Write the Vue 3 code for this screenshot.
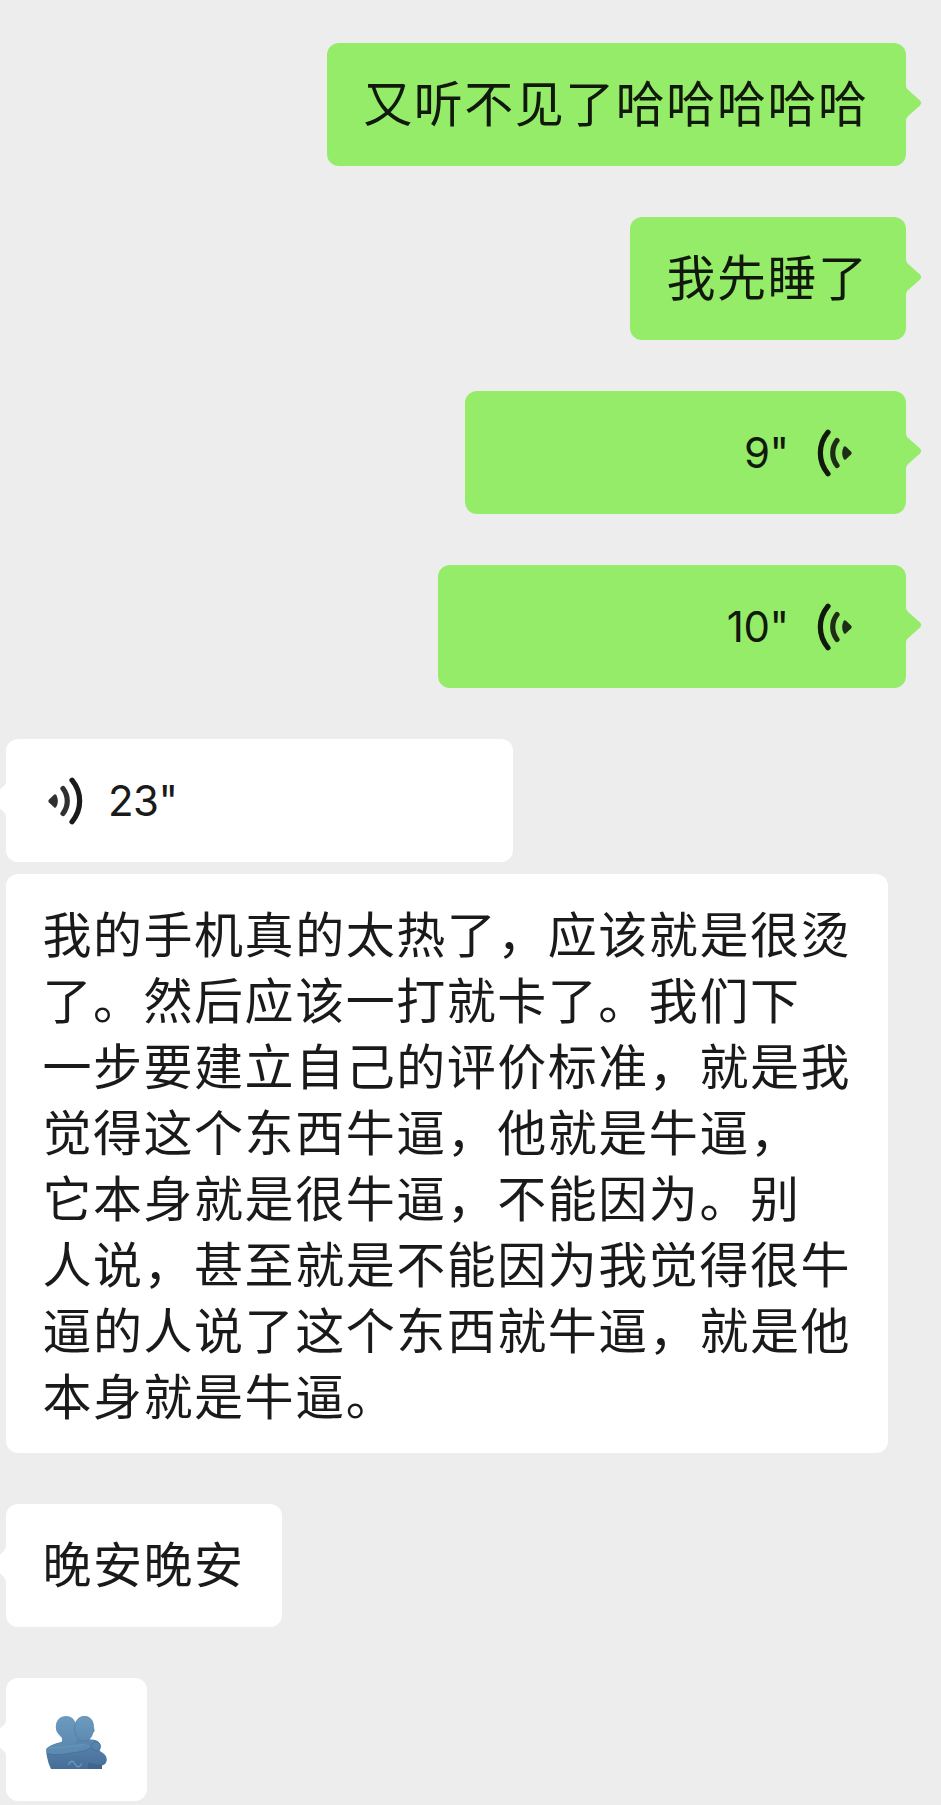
<script setup>
import { ref } from 'vue'

const messages = ref([
  { id: 1, side: 'right', type: 'text', lines: ['又听不见了哈哈哈哈哈'] },
  { id: 2, side: 'right', type: 'text', lines: ['我先睡了'] },
  { id: 3, side: 'right', type: 'voice', seconds: 9, width: 441 },
  { id: 4, side: 'right', type: 'voice', seconds: 10, width: 468 },
  {
    id: 5,
    side: 'left',
    type: 'voice',
    seconds: 23,
    width: 507,
    transcript: [
      '我的手机真的太热了，应该就是很烫',
      '了。然后应该一打就卡了。我们下',
      '一步要建立自己的评价标准，就是我',
      '觉得这个东西牛逼，他就是牛逼，',
      '它本身就是很牛逼，不能因为。别',
      '人说，甚至就是不能因为我觉得很牛',
      '逼的人说了这个东西就牛逼，就是他',
      '本身就是牛逼。',
    ],
  },
  { id: 6, side: 'left', type: 'text', lines: ['晚安晚安'] },
  { id: 7, side: 'left', type: 'hug' },
])
</script>

<template>
  <div class="chat">
    <div v-for="msg in messages" :key="msg.id" class="message" :class="msg.side">
      <div class="bubble" :class="msg.type" :style="msg.width ? { width: msg.width + 'px' } : null">
        <svg class="tail" width="18" height="38" viewBox="0 0 18 38">
          <path d="M0 0H1C1 2.500 2 4 3.500 5.300L15 15.600Q17.500 18 15 20.400L3.500 30.700C2 32 1 33.500 1 36H0Z" />
        </svg>

        <template v-if="msg.type === 'text'">
          <div v-for="line in msg.lines" :key="line" class="line">{{ line }}</div>
        </template>

        <template v-else-if="msg.type === 'voice'">
          <span class="seconds">{{ msg.seconds }}"</span>
          <svg class="wave" width="36" height="50" viewBox="0 0 36 50">
            <path class="arc" d="M11 4.200C.8 16.500 .8 33.500 11 45.800" />
            <path class="arc dim" d="M20 12.500C14.300 20 14.300 30 20 37.500" />
            <path class="dot" d="M29 18.800L34.200 23.800Q35.300 25 34.200 26.200L29 31.200Q27.600 32.400 26.600 30.800Q23.600 25 26.600 19.200Q27.600 17.600 29 18.800Z" />
          </svg>
        </template>

        <svg v-else class="hug-icon" width="62" height="54" viewBox="0 0 62 54">
          <defs>
            <linearGradient id="hugHead" x1="0" y1="0" x2="0" y2="1">
              <stop offset="0" stop-color="#6d9bbf" />
              <stop offset="1" stop-color="#5d8ab1" />
            </linearGradient>
            <linearGradient id="hugBody" x1="0" y1="0" x2="0" y2="1">
              <stop offset="0" stop-color="#5d8ab1" />
              <stop offset="1" stop-color="#456d97" />
            </linearGradient>
          </defs>
          <!-- backs and shoulders -->
          <path fill="url(#hugBody)" d="M15 26L28 20L45 23.500Q54 23 54.800 31Q54.500 33.500 53.500 35Q60.800 38.500 60.800 43.500Q60.500 48.500 56 49.500V53H5Q2 47 1 41Q0 36 .2 33Q3 29 15 26Z" />
          <path fill="#3f648e" d="M42 46.500L48 48L56 49V53H42Z" />
          <!-- heads -->
          <path fill="url(#hugHead)" d="M20 0C26 0 30 4.500 30.500 11L32 22L29 28H14Q16.500 26 16 22.500C15.500 20 9.800 18 9.800 11C9.800 4.500 14 0 20 0Z" />
          <path fill="url(#hugHead)" stroke="#4b79a3" stroke-opacity=".8" stroke-width=".8" d="M38.500 .3C44.500 .3 47.500 5.500 47.500 10.500L48.200 15L46.800 17C45.500 22 42.500 25 38 25C32 25 28.700 19 28.700 12.500C28.700 5.500 32.500 .3 38.500 .3Z" />
          <!-- arms -->
          <path fill="#5d8ab1" d="M.5 33Q4 28.500 15 27Q28 28 39 27Q43 27.500 44.500 31.500Q36 36 26 37Q12 40 1 37Z" />
          <path fill="none" stroke="#46729c" stroke-width=".9" stroke-linecap="round" d="M1.500 38Q12 40 25 37Q37 36 44.500 32.500Q50 36 54 35.500" />
          <path fill="none" stroke="#6b98be" stroke-width=".8" stroke-linecap="round" d="M3 32Q18 32 38 28.500" />
          <circle cx="50" cy="30" r="4.300" fill="#5784ac" stroke="#47739d" stroke-width=".8" />
          <path fill="none" stroke="#6f9cc0" stroke-width="1.300" stroke-linecap="round" stroke-linejoin="round" d="M22.500 48.500C25 44 27 44.500 29 48S33 52 35.500 48" />
        </svg>
      </div>

      <div v-if="msg.transcript" class="bubble text transcript">
        <div v-for="line in msg.transcript" :key="line" class="line">{{ line }}</div>
      </div>
    </div>
  </div>
</template>

<style>
body {
  margin: 0;
  background: #ededed;
}
</style>

<style scoped>
.chat {
  display: flex;
  flex-direction: column;
  gap: 51px;
  box-sizing: border-box;
  height: 1805px;
  padding: 43px 35px 0 6px;
  overflow: hidden;
  background: #ededed;
  color: #1a1a1a;
  font-family: Inter, "Noto Sans CJK SC", sans-serif;
}
.message {
  display: flex;
  flex-direction: column;
  align-items: flex-start;
  gap: 12px;
}
.message.right {
  align-items: flex-end;
}
.bubble {
  position: relative;
  box-sizing: border-box;
  min-height: 123px;
  border-radius: 12px;
  background: #fff;
}
.right .bubble {
  background: #95ec69;
  color: #11190c;
}
.tail {
  position: absolute;
  top: 42px;
  left: 100%;
  margin-left: -1px;
  fill: #95ec69;
}
.left .tail {
  left: auto;
  right: 100%;
  margin: 0 -1px 0 0;
  fill: #fff;
  transform: scaleX(-1);
}
.text {
  padding: 25px 37.5px 32px 36.5px;
}
.transcript {
  padding-bottom: 26px;
}
.line {
  height: 66px;
  font-family: "Noto Sans CJK SC", sans-serif;
  font-size: 49px;
  line-height: 66px;
  letter-spacing: 1.53px;
  white-space: nowrap;
}
.voice {
  display: flex;
  align-items: center;
  justify-content: flex-end;
  gap: 28.5px;
  padding: 0 53px;
}
.left .voice {
  flex-direction: row-reverse;
  gap: 25px;
  padding: 0 41px;
}
.seconds {
  font-size: 42px;
  line-height: 50px;
  letter-spacing: -0.5px;
}
.left .wave {
  transform: scaleX(-1);
}
.arc {
  fill: none;
  stroke: currentColor;
  stroke-width: 5.2;
  stroke-linecap: round;
}
.dim,
.dot {
  opacity: 0.9;
}
.dot {
  fill: currentColor;
}
.hug {
  display: flex;
  align-items: flex-start;
  padding: 38px 39px 0 40px;
}
</style>
